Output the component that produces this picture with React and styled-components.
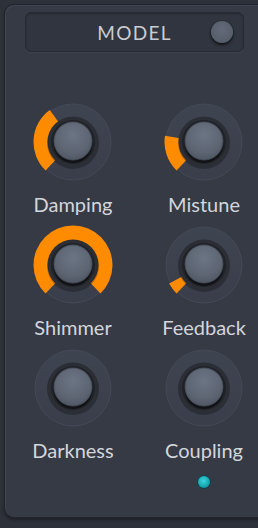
import React from "react";
import styled, { createGlobalStyle } from "styled-components";

const Global = createGlobalStyle`
  html, body { margin: 0; padding: 0; background: #2d3139; overflow: hidden; }
  body { width: 258px; height: 528px; font-family: Lato, "Open Sans", sans-serif; }
`;

const Page = styled.div`
  width: 258px;
  height: 528px;
  padding: 4px 0 0 4px;
  box-sizing: border-box;
  overflow: hidden;
`;

const Panel = styled.div`
  width: 280px;
  height: 514px;
  box-sizing: border-box;
  background: #363a45;
  border: 1px solid #22252b;
  border-radius: 10px;
  box-shadow: inset 1px 1px 0 #3f4450, 0 2px 3px rgba(0, 0, 0, 0.35);
  padding: 7px 0 0 0;
  display: flex;
  flex-direction: column;
`;

const Header = styled.div`
  margin-left: 20px;
  width: 219px;
  height: 40px;
  box-sizing: border-box;
  border: 1px solid #262a31;
  border-radius: 6px;
  background: #31353f;
  box-shadow: inset 0 1px 2px rgba(0, 0, 0, 0.25), 0 1px 0 rgba(255, 255, 255, 0.04);
  display: flex;
  align-items: center;
  justify-content: center;
  position: relative;
`;

const Title = styled.span`
  font-size: 19px;
  letter-spacing: 1.3px;
  color: #c9ccd2;
  margin-left: 0px;
`;

const HeaderKnob = styled.div`
  position: absolute;
  right: 10px;
  top: 8px;
  width: 22px;
  height: 22px;
  border-radius: 50%;
  background: radial-gradient(circle at 50% 40%, #636b7a 0%, #565e6c 70%, #4c5360 100%);
  box-shadow: 0 2px 3px rgba(0, 0, 0, 0.65), 0 0 0 1px #2a2e35;
`;

const Grid = styled.div`
  margin-top: 50px;
  margin-left: 18px;
  display: grid;
  grid-template-columns: 100px 100px;
  column-gap: 31px;
  row-gap: 10px;
`;

const Cell = styled.div`
  display: flex;
  flex-direction: column;
  align-items: center;
`;

const Label = styled.div`
  margin-top: 11px;
  height: 22px;
  line-height: 22px;
  font-size: 20px;
  color: #d3d6db;
  white-space: nowrap;
`;

const LedCell = styled.div`
  grid-column: 2;
  display: flex;
  justify-content: center;
  margin-top: 5px;
`;

const Led = styled.div`
  width: 12px;
  height: 12px;
  border-radius: 50%;
  background: radial-gradient(circle at 45% 40%, #3fd3dc 0%, #16aab6 55%, #0c6b74 100%);
  box-shadow: 0 0 0 1px #153b41, 0 0 3px rgba(30, 180, 190, 0.35);
`;

const polar = (cx, cy, r, a) => {
  const rad = (a * Math.PI) / 180;
  return [cx + r * Math.sin(rad), cy - r * Math.cos(rad)];
};

const bandPath = (cx, cy, rIn, rOut, a0, a1) => {
  const large = a1 - a0 > 180 ? 1 : 0;
  const [x0, y0] = polar(cx, cy, rOut, a0);
  const [x1, y1] = polar(cx, cy, rOut, a1);
  const [x2, y2] = polar(cx, cy, rIn, a1);
  const [x3, y3] = polar(cx, cy, rIn, a0);
  return `M${x0} ${y0} A${rOut} ${rOut} 0 ${large} 1 ${x1} ${y1} L${x2} ${y2} A${rIn} ${rIn} 0 ${large} 0 ${x3} ${y3} Z`;
};

function Knob({ end, id }) {
  const c = 40;
  return (
    <svg width="80" height="80" viewBox="0 0 80 80">
      <defs>
        <radialGradient id={`cap-${id}`} cx="50%" cy="35%" r="65%">
          <stop offset="0%" stopColor="#6c7584" />
          <stop offset="70%" stopColor="#5d6573" />
          <stop offset="100%" stopColor="#505764" />
        </radialGradient>
        <linearGradient id={`ring-${id}`} x1="0" y1="0" x2="0" y2="1">
          <stop offset="0%" stopColor="#3f4451" />
          <stop offset="100%" stopColor="#3a3e4a" />
        </linearGradient>
      </defs>
      <circle cx={c} cy={c} r="38" fill={`url(#ring-${id})`} stroke="#444956" strokeWidth="1" />
      {end != null && (
        <path d={bandPath(c, c, 24.5, 39.5, -136, end)} fill="#ff8c00" />
      )}
      <circle cx={c} cy={c + 1} r="26" fill="rgba(0,0,0,0.25)" />
      <circle cx={c} cy={c} r="25.5" fill="#2b2e35" />
      <circle cx={c} cy={c} r="22" fill="#1f2227" />
      <circle cx={c} cy={c + 1.5} r="19.5" fill="rgba(0,0,0,0.45)" />
      <circle cx={c} cy={c - 1} r="19" fill={`url(#cap-${id})`} stroke="#4a515d" strokeWidth="0.8" />
    </svg>
  );
}

const knobs = [
  { label: "Damping", end: -36 },
  { label: "Mistune", end: -81 },
  { label: "Shimmer", end: 136 },
  { label: "Feedback", end: -118 },
  { label: "Darkness", end: null },
  { label: "Coupling", end: null },
];

export default function App() {
  return (
    <Page>
      <Global />
      <Panel>
        <Header>
          <Title>MODEL</Title>
          <HeaderKnob />
        </Header>
        <Grid>
          {knobs.map((k, i) => (
            <Cell key={k.label}>
              <Knob end={k.end} id={i} />
              <Label>{k.label}</Label>
            </Cell>
          ))}
          <LedCell>
            <Led />
          </LedCell>
        </Grid>
      </Panel>
    </Page>
  );
}
